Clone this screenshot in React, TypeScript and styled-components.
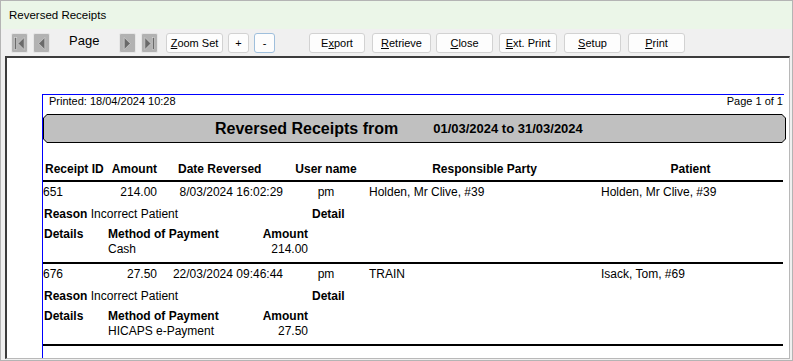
import React from "react"
import styled, { createGlobalStyle } from "styled-components"

const GlobalStyle = createGlobalStyle`
  html, body {
    margin: 0;
    padding: 0;
    background: #f0f0f0;
  }
  * {
    box-sizing: border-box;
  }
`

const REPORT_FONT = `"Liberation Sans", Arial, sans-serif`

const Window = styled.div`
  width: 793px;
  height: 361px;
  border: 1px solid #b4b4b4;
  background: #f0f0f0;
  display: flex;
  flex-direction: column;
  overflow: hidden;
`

const TitleBar = styled.div`
  height: 28px;
  flex: none;
  background: #ebf6e8;
  display: flex;
  align-items: center;
  padding-left: 8px;
  font-family: ${REPORT_FONT};
  font-size: 11.5px;
  color: #000;
`

const Toolbar = styled.div`
  height: 27px;
  flex: none;
  display: flex;
  align-items: flex-start;
  padding: 4px 0 0 10px;
`

const NavButton = styled.button<{ $gap?: number }>`
  width: 17px;
  height: 20px;
  margin-left: ${({ $gap }) => $gap ?? 0}px;
  padding: 0;
  border: 1px solid #e6e6e6;
  border-radius: 2px;
  background: #b2b2b2;
  display: flex;
  align-items: center;
  justify-content: center;
`

const PageLabel = styled.span`
  margin-left: 19px;
  width: 50px;
  font-family: ${REPORT_FONT};
  font-size: 13px;
  line-height: 16px;
  color: #000;
`

const ToolButton = styled.button<{ $w: number; $gap: number; $focused?: boolean }>`
  width: ${({ $w }) => $w}px;
  height: 20px;
  margin-left: ${({ $gap }) => $gap}px;
  padding: 0;
  border: 1px solid ${({ $focused }) => ($focused ? "#9fbfdc" : "#d2d2d2")};
  border-radius: 3px;
  background: #fdfdfd;
  font-family: ${REPORT_FONT};
  font-size: 11px;
  color: #000;
  display: flex;
  align-items: center;
  justify-content: center;
`

const Viewport = styled.div`
  flex: 1;
  margin: 0 2px 1px 4px;
  border-left: 2px solid #3c3c3c;
  border-top: 2px solid #3c3c3c;
  border-right: 1px solid #b8b8b8;
  border-bottom: 1px solid #b8b8b8;
  background: #fff;
  overflow: hidden;
  padding: 36px 0 0 35px;
`

const Page = styled.div`
  width: 742px;
  height: 400px;
  border-left: 1px solid #0000ff;
  border-top: 1px solid #0000ff;
  font-family: ${REPORT_FONT};
  color: #000;
`

const PageHeader = styled.div`
  height: 19px;
  display: flex;
  justify-content: space-between;
  padding: 0 1px 0 6px;
  font-size: 11px;
  line-height: 13px;
`

const BarFrame = styled.div`
  height: 29px;
  margin-right: -2px;
  padding: 1px;
  background: #000;
  clip-path: polygon(4px 0, calc(100% - 4px) 0, 100% 4px, 100% calc(100% - 4px), calc(100% - 4px) 100%, 4px 100%, 0 calc(100% - 4px), 0 4px);
`

const Bar = styled.div`
  height: 100%;
  background: #c0c0c0;
  clip-path: polygon(3px 0, calc(100% - 3px) 0, 100% 3px, 100% calc(100% - 3px), calc(100% - 3px) 100%, 3px 100%, 0 calc(100% - 3px), 0 3px);
  display: flex;
  align-items: center;
  gap: 35px;
  padding-left: 171px;
  font-weight: bold;
`

const BarTitle = styled.span`
  font-size: 16px;
`

const BarRange = styled.span`
  font-size: 13px;
`

const Table = styled.div`
  width: 740px;
  margin-top: 18px;
`

const Columns = styled.div<{ $head?: boolean }>`
  display: grid;
  grid-template-columns: 66px 51px 130px 72px 236px 185px;
  height: ${({ $head }) => ($head ? 19 : 22)}px;
  padding-top: ${({ $head }) => ($head ? 0 : 2)}px;
  font-size: 12px;
  line-height: 16px;
  font-weight: ${({ $head }) => ($head ? "bold" : "normal")};
  white-space: nowrap;
  border-bottom: ${({ $head }) => ($head ? "2px solid #000" : "none")};
  box-sizing: content-box;
`

const Cell = styled.span<{ $align?: "left" | "right" | "center"; $pl?: number; $pr?: number }>`
  text-align: ${({ $align }) => $align ?? "left"};
  padding-left: ${({ $pl }) => $pl ?? 0}px;
  padding-right: ${({ $pr }) => $pr ?? 0}px;
`

const Record = styled.div`
  border-bottom: 2px solid #000;
`

const ReasonRow = styled.div`
  display: grid;
  grid-template-columns: 268px 1fr;
  height: 20px;
  padding-left: 1px;
  font-size: 12px;
  line-height: 16px;
`

const PaymentRow = styled.div<{ $head?: boolean }>`
  display: grid;
  grid-template-columns: 64px 120px 80px;
  height: ${({ $head }) => ($head ? 15 : 21)}px;
  padding-left: 1px;
  font-size: 12px;
  line-height: 16px;
  font-weight: ${({ $head }) => ($head ? "bold" : "normal")};
`

const Bold = styled.b`
  font-weight: bold;
`

type NavKind = "first" | "prev" | "next" | "last"

const NavIcon: React.FC<{ kind: NavKind }> = ({ kind }) => {
  const left = kind === "first" || kind === "prev"
  const withBar = kind === "first" || kind === "last"
  let points = left ? "11.5,3 11.5,16 5,9.5" : "4.5,3 4.5,16 11,9.5"
  if (withBar) points = left ? "13,3 13,16 6.5,9.5" : "3,3 3,16 9.5,9.5"
  return (
    <svg width="16" height="19" viewBox="0 0 16 19">
      {withBar && (
        <rect
          x={left ? 2.5 : 11}
          y={3}
          width={2.5}
          height={13}
          fill="#6a6a6a"
          stroke="#d6d6d6"
          strokeWidth={0.7}
        />
      )}
      <polygon points={points} fill="#6a6a6a" stroke="#d6d6d6" strokeWidth={0.7} />
    </svg>
  )
}

type Receipt = {
  id: string
  amount: string
  date: string
  user: string
  party: string
  patient: string
  reason: string
  method: string
}

const receipts: Receipt[] = [
  {
    id: "651",
    amount: "214.00",
    date: "8/03/2024 16:02:29",
    user: "pm",
    party: "Holden, Mr Clive, #39",
    patient: "Holden, Mr Clive, #39",
    reason: "Incorrect Patient",
    method: "Cash",
  },
  {
    id: "676",
    amount: "27.50",
    date: "22/03/2024 09:46:44",
    user: "pm",
    party: "TRAIN",
    patient: "Isack, Tom, #69",
    reason: "Incorrect Patient",
    method: "HICAPS e-Payment",
  },
]

const App: React.FC = () => {
  return (
    <>
      <GlobalStyle />
      <Window>
        <TitleBar>Reversed Receipts</TitleBar>

        <Toolbar>
          <NavButton>
            <NavIcon kind="first" />
          </NavButton>
          <NavButton $gap={5}>
            <NavIcon kind="prev" />
          </NavButton>
          <PageLabel>Page</PageLabel>
          <NavButton>
            <NavIcon kind="next" />
          </NavButton>
          <NavButton $gap={5}>
            <NavIcon kind="last" />
          </NavButton>
          <ToolButton $w={57} $gap={8}>
            <u>Z</u>oom Set
          </ToolButton>
          <ToolButton $w={21} $gap={5}>+</ToolButton>
          <ToolButton $w={21} $gap={5} $focused>
            -
          </ToolButton>
          <ToolButton $w={56} $gap={34}>
            E<u>x</u>port
          </ToolButton>
          <ToolButton $w={59} $gap={7}>
            <u>R</u>etrieve
          </ToolButton>
          <ToolButton $w={57} $gap={5}>
            <u>C</u>lose
          </ToolButton>
          <ToolButton $w={58} $gap={6}>
            <u>E</u>xt. Print
          </ToolButton>
          <ToolButton $w={57} $gap={7}>
            <u>S</u>etup
          </ToolButton>
          <ToolButton $w={57} $gap={7}>
            <u>P</u>rint
          </ToolButton>
        </Toolbar>

        <Viewport>
          <Page>
            <PageHeader>
              <span>Printed: 18/04/2024 10:28</span>
              <span>Page 1 of 1</span>
            </PageHeader>

            <BarFrame>
              <Bar>
                <BarTitle>Reversed Receipts from</BarTitle>
                <BarRange>01/03/2024 to 31/03/2024</BarRange>
              </Bar>
            </BarFrame>

            <Table>
              <Columns $head>
                <Cell $pl={2}>Receipt ID</Cell>
                <Cell $align="right" $pr={3}>Amount</Cell>
                <Cell $pl={18}>Date Reversed</Cell>
                <Cell $align="center">User name</Cell>
                <Cell $align="center" $pl={9}>Responsible Party</Cell>
                <Cell $align="center">Patient</Cell>
              </Columns>

              {receipts.map((r) => (
                <Record key={r.id}>
                  <Columns>
                    <Cell>{r.id}</Cell>
                    <Cell $align="right" $pr={3}>{r.amount}</Cell>
                    <Cell $align="right" $pr={7}>{r.date}</Cell>
                    <Cell $align="center">{r.user}</Cell>
                    <Cell $pl={7}>{r.party}</Cell>
                    <Cell $pl={3}>{r.patient}</Cell>
                  </Columns>
                  <ReasonRow>
                    <span>
                      <Bold>Reason</Bold> {r.reason}
                    </span>
                    <Bold>Detail</Bold>
                  </ReasonRow>
                  <PaymentRow $head>
                    <Cell>Details</Cell>
                    <Cell>Method of Payment</Cell>
                    <Cell $align="right">Amount</Cell>
                  </PaymentRow>
                  <PaymentRow>
                    <Cell />
                    <Cell>{r.method}</Cell>
                    <Cell $align="right">{r.amount}</Cell>
                  </PaymentRow>
                </Record>
              ))}
            </Table>
          </Page>
        </Viewport>
      </Window>
    </>
  )
}

export default App
